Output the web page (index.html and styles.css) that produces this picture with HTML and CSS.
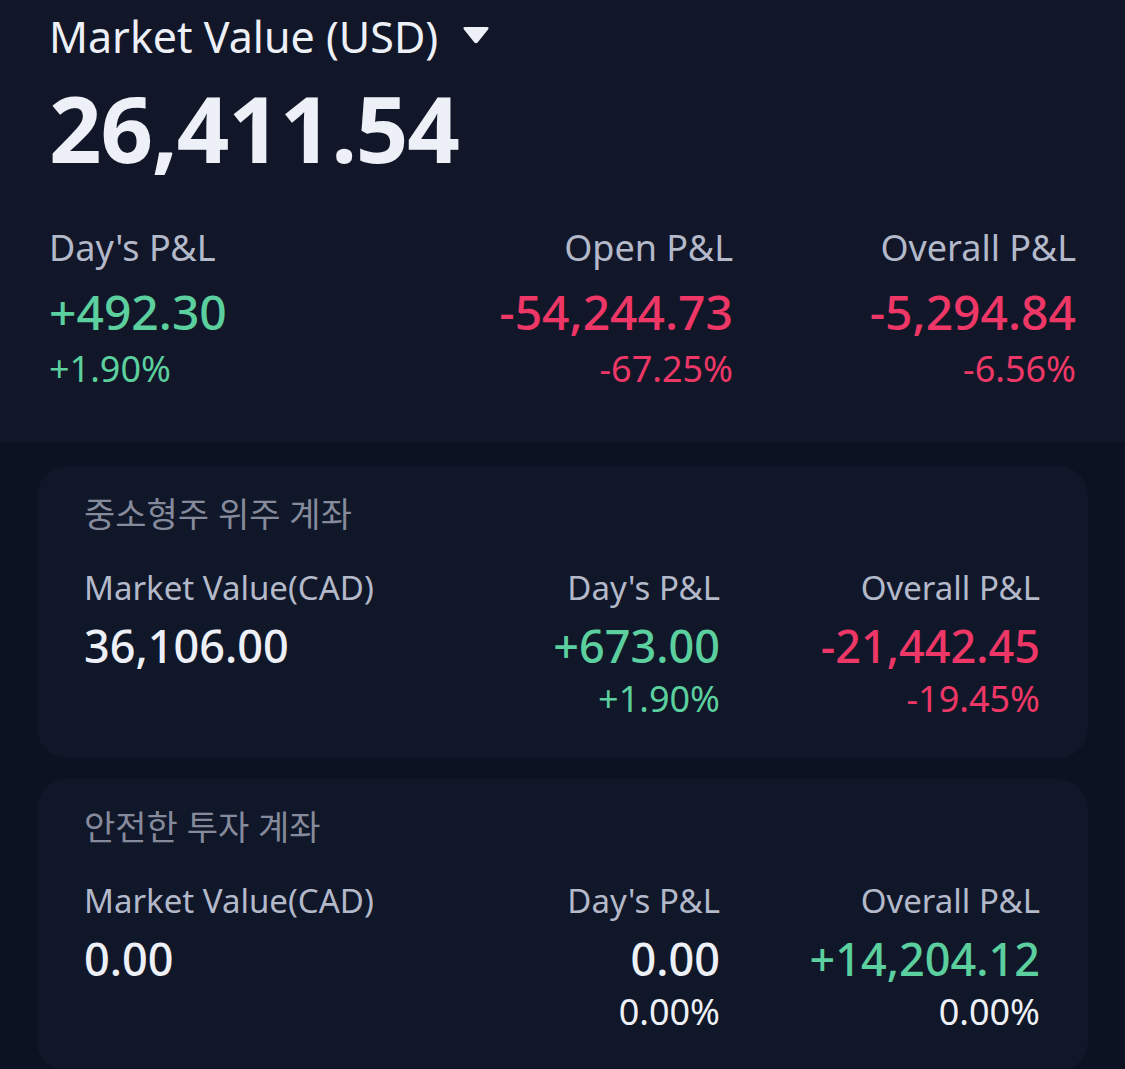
FILE: index.html
```html
<!DOCTYPE html>
<html lang="ko">
<head>
<meta charset="utf-8">
<title>Portfolio</title>
<link rel="stylesheet" href="styles.css">
</head>
<body>
<section class="summary">
  <div class="title-row">
    <span class="title">Market Value (USD)</span>
    <svg class="caret" width="28" height="20" viewBox="0 0 28 20"><path d="M3 2 H25 Q27.5 2 26 4.5 L16 17 Q14 19.5 12 17 L2 4.5 Q0.5 2 3 2 Z" fill="#eef0f7"/></svg>
  </div>
  <div class="total">26,411.54</div>
  <div class="pl-grid">
    <div class="col left">
      <div class="label">Day's P&amp;L</div>
      <div class="value up">+492.30</div>
      <div class="pct up">+1.90%</div>
    </div>
    <div class="col right">
      <div class="label">Open P&amp;L</div>
      <div class="value down">-54,244.73</div>
      <div class="pct down">-67.25%</div>
    </div>
    <div class="col right">
      <div class="label">Overall P&amp;L</div>
      <div class="value down">-5,294.84</div>
      <div class="pct down">-6.56%</div>
    </div>
  </div>
</section>
<main class="accounts">
  <article class="card">
    <h2 class="card-title">중소형주 위주 계좌</h2>
    <div class="card-grid">
      <div class="col left">
        <div class="clabel">Market Value(CAD)</div>
        <div class="cvalue">36,106.00</div>
      </div>
      <div class="col right">
        <div class="clabel">Day's P&amp;L</div>
        <div class="cvalue up">+673.00</div>
        <div class="cpct up">+1.90%</div>
      </div>
      <div class="col right">
        <div class="clabel">Overall P&amp;L</div>
        <div class="cvalue down">-21,442.45</div>
        <div class="cpct down">-19.45%</div>
      </div>
    </div>
  </article>
  <article class="card">
    <h2 class="card-title">안전한 투자 계좌</h2>
    <div class="card-grid">
      <div class="col left">
        <div class="clabel">Market Value(CAD)</div>
        <div class="cvalue">0.00</div>
      </div>
      <div class="col right">
        <div class="clabel">Day's P&amp;L</div>
        <div class="cvalue">0.00</div>
        <div class="cpct">0.00%</div>
      </div>
      <div class="col right">
        <div class="clabel">Overall P&amp;L</div>
        <div class="cvalue up">+14,204.12</div>
        <div class="cpct">0.00%</div>
      </div>
    </div>
  </article>
</main>
</body>
</html>
```
FILE: styles.css
```css
html, body {
  margin: 0;
  padding: 0;
  background: #0c1222;
  color: #eef0f7;
  font-family: "Noto Sans", "Noto Sans CJK KR", sans-serif;
}

.summary {
  background: #111729;
  height: 442px;
  box-sizing: border-box;
  padding: 7px 49px 0 49px;
}

.title-row {
  display: flex;
  align-items: center;
  gap: 24px;
  height: 60px;
}

.title {
  font-size: 43px;
  line-height: 60px;
  color: #eef0f7;
}

.caret {
  display: block;
  margin-top: -4px;
}

.total {
  font-size: 92px;
  font-weight: 700;
  line-height: 110px;
  margin-top: 6px;
  color: #eef0f7;
  letter-spacing: -1.2px;
}

.pl-grid {
  display: grid;
  grid-template-columns: 1fr 1fr 343px;
  margin-top: 41px;
}

.col { display: flex; flex-direction: column; }
.col.left { align-items: flex-start; }
.col.right { align-items: flex-end; }

.label {
  font-size: 36px;
  line-height: 48px;
  color: #b4b9ca;
}

.value {
  font-size: 48px;
  font-weight: 500;
  line-height: 64px;
  margin-top: 8px;
}

.pct {
  font-size: 36px;
  line-height: 48px;
  margin-top: 1px;
}

.up { color: #5ccf9e; }
.down { color: #ee3766; }

.accounts {
  display: flex;
  flex-direction: column;
  gap: 21px;
  padding: 24px 37px 0 37px;
}

.card {
  background: #101729;
  border-radius: 30px;
  padding: 24px 48px 0 47px;
  height: 292px;
  box-sizing: border-box;
}

.card-title {
  margin: 0;
  font-size: 34px;
  font-weight: 400;
  line-height: 48px;
  color: #868b9c;
}

.card-grid {
  display: grid;
  grid-template-columns: 1fr 1fr 320px;
  margin-top: 27px;
}

.clabel {
  font-size: 33px;
  line-height: 46px;
  color: #b4b9ca;
}

.cvalue {
  font-size: 45px;
  font-weight: 500;
  line-height: 60px;
  margin-top: 5px;
  color: #eef0f7;
}

.cpct {
  font-size: 36px;
  line-height: 46px;
  color: #eef0f7;
}
.cvalue.up, .cpct.up { color: #5ccf9e; }
.cvalue.down, .cpct.down { color: #ee3766; }
```
